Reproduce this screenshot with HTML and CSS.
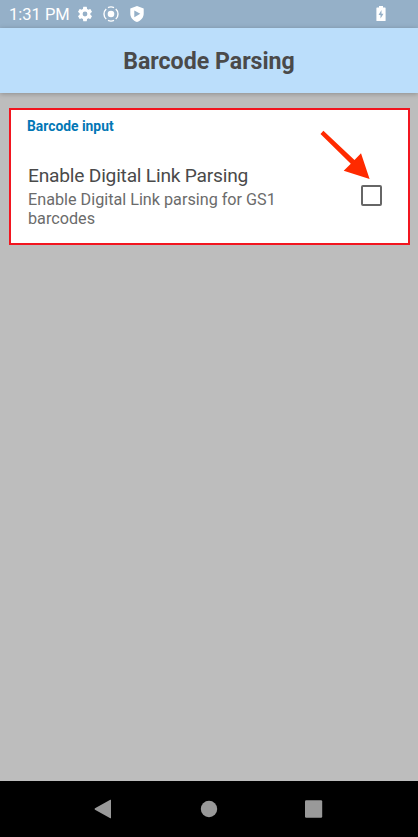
FILE: index.html
```html
<!DOCTYPE html>
<html lang="en">
<head>
<meta charset="utf-8">
<title>Barcode Parsing</title>
<link rel="stylesheet" href="styles.css">
</head>
<body>
<div class="status">
  <span class="time">1:31 PM</span>
  <svg class="gear" width="18" height="18" viewBox="0 0 24 24"><path fill="#fff" d="M19.14 12.94c.04-.3.06-.61.06-.94 0-.32-.02-.64-.07-.94l2.03-1.58a.49.49 0 0 0 .12-.61l-1.92-3.32a.488.488 0 0 0-.59-.22l-2.39.96c-.5-.38-1.03-.7-1.62-.94l-.36-2.54a.484.484 0 0 0-.48-.41h-3.84c-.24 0-.43.17-.47.41l-.36 2.54c-.59.24-1.13.57-1.62.94l-2.39-.96c-.22-.08-.47 0-.59.22L2.74 8.87c-.12.21-.08.47.12.61l2.03 1.58c-.05.3-.09.63-.09.94s.02.64.07.94l-2.03 1.58a.49.49 0 0 0-.12.61l1.92 3.32c.12.22.37.29.59.22l2.39-.96c.5.38 1.03.7 1.62.94l.36 2.54c.05.24.24.41.48.41h3.84c.24 0 .44-.17.47-.41l.36-2.54c.59-.24 1.13-.56 1.62-.94l2.39.96c.22.08.47 0 .59-.22l1.92-3.32c.12-.22.07-.47-.12-.61l-2.01-1.58zM12 15.2A3.2 3.2 0 1 1 12 8.8a3.2 3.2 0 0 1 0 6.4z"/></svg>
  <svg class="target" width="16" height="16" viewBox="0 0 16 16"><circle cx="8" cy="8" r="3.3" fill="#fff"/><path fill="none" stroke="#fff" stroke-width="1.4" d="M5 1.6A7 7 0 0 1 11 1.6M12.8 2.9A7 7 0 0 1 12.8 13.1M11 14.4A7 7 0 0 1 5 14.4M3.2 13.1A7 7 0 0 1 3.2 2.9"/></svg>
  <svg class="shield" width="14" height="16" viewBox="0 0 14 16"><path fill="#fff" fill-rule="evenodd" d="M7 0L13.7 2.6V7.5C13.7 11.6 11 14.7 7 16C3 14.7.3 11.6.3 7.5V2.6zM4.3 4.4V11.2L10.3 7.8z"/></svg>
  <svg class="battery" width="10" height="15" viewBox="0 0 10 15"><path fill="#fff" fill-rule="evenodd" d="M3 0H7V1.6H9Q9.6 1.6 9.6 2.2V14.4Q9.6 15 9 15H1Q.4 15 .4 14.4V2.2Q.4 1.6 1 1.6H3zM5.5 4L2.5 9H4.5V12.5L7.5 7.8H5.5z"/></svg>
</div>
<header class="bar">Barcode Parsing</header>
<main class="content">
  <section class="card">
    <h2 class="category">Barcode input</h2>
    <div class="row">
      <div class="text">
        <div class="name">Enable Digital Link Parsing</div>
        <div class="summary">Enable Digital Link parsing for GS1<br>barcodes</div>
      </div>
      <span class="checkbox"></span>
    </div>
    <svg class="arrow" width="52" height="52" viewBox="0 0 52 52"><path fill="#ff2a00" d="M3.4 .7L34.5 30L41 23.2L49.6 49L23.7 40.8L30.8 33.8L.5 3.9Z"/></svg>
  </section>
</main>
<nav class="nav">
  <svg width="18" height="20" viewBox="0 0 18 20"><path fill="#999" d="M16.3.8Q17 .4 17 1.2V18.8Q17 19.6 16.3 19.2L1 10.7Q0 10 1 9.3z"/></svg>
  <svg width="18" height="20" viewBox="0 0 18 20"><circle cx="9" cy="10" r="8.2" fill="#999"/></svg>
  <svg width="18" height="20" viewBox="0 0 18 20"><rect x="0" y="1.2" width="17.2" height="17.6" rx="1.2" fill="#999"/></svg>
</nav>
</body>
</html>
```

FILE: styles.css
```css
* { box-sizing: border-box; }
body {
  margin: 0;
  height: 837px;
  display: flex;
  flex-direction: column;
  background: #bdbdbd;
  font-family: Roboto, sans-serif;
  overflow: hidden;
}
.status {
  height: 28px;
  flex: none;
  display: flex;
  align-items: center;
  padding: 0 32px 0 9px;
  background: #95b0c8;
  color: #fff;
}
.time { width: 67px; padding-top: 1px; font-size: 16.5px; line-height: 28px; white-space: nowrap; }
.target { margin-left: 9px; }
.shield { margin-left: 10.5px; }
.battery { margin-left: auto; margin-bottom: 1px; }
.bar {
  height: 65px;
  flex: none;
  background: #bbdefb;
  color: #4a4a4a;
  font-size: 23.15px;
  font-weight: 700;
  line-height: 67px;
  text-align: center;
  box-shadow: 0 1px 5px rgba(0, 0, 0, .25);
}
.content { flex: 1; padding: 15px 8px 0 9px; }
.card {
  position: relative;
  height: 137px;
  padding: 7px 26px 0 16px;
  background: #fff;
  border: 2px solid #f2151f;
}
.category { margin: 0; font-size: 13.85px; font-weight: 700; line-height: 18px; color: #0277b5; }
.row { display: flex; justify-content: space-between; align-items: center; margin-top: 29px; padding-left: 1px; }
.name { font-size: 19.2px; letter-spacing: -.22px; line-height: 24px; color: #4a4a4a; white-space: nowrap; }
.summary { margin-top: 2px; font-size: 16.2px; line-height: 19px; color: #6b6b6b; white-space: nowrap; }
.checkbox { width: 21px; height: 21px; margin-bottom: 2px; border: 2px solid #666; border-radius: 2px; }
.arrow { position: absolute; left: 309px; top: 20px; }
.nav {
  height: 56px;
  flex: none;
  display: flex;
  justify-content: space-between;
  align-items: center;
  padding: 0 95px 0 94px;
  background: #000;
}
```
